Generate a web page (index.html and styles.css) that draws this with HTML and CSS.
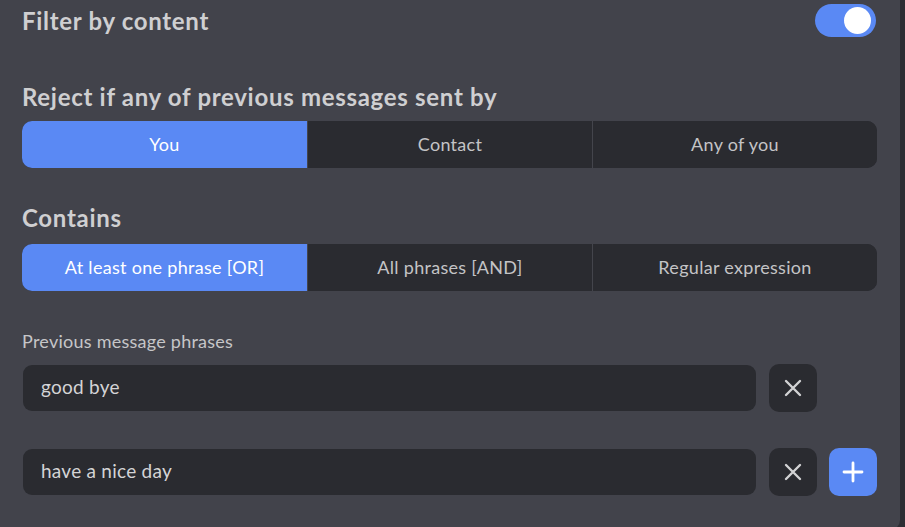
FILE: index.html
```html
<!DOCTYPE html>
<html lang="en">
<head>
    <meta charset="UTF-8">
    <meta name="viewport" content="width=device-width, initial-scale=1.0">
    <title>Filter by content</title>
    <link rel="stylesheet" href="styles.css">
</head>
<body>
    <div id="panel">
        <div class="toprow">
            <h2 class="title">Filter by content</h2>
            <div class="toggle on"><span class="knob"></span></div>
        </div>

        <h2 class="title reject">Reject if any of previous messages sent by</h2>
        <div class="segments first">
            <button class="seg active">You</button>
            <button class="seg">Contact</button>
            <button class="seg">Any of you</button>
        </div>

        <h2 class="title contains">Contains</h2>
        <div class="segments second">
            <button class="seg active">At least one phrase [OR]</button>
            <button class="seg">All phrases [AND]</button>
            <button class="seg">Regular expression</button>
        </div>

        <div class="label">Previous message phrases</div>

        <div class="phrase">
            <input type="text" value="good bye">
            <button class="iconbtn remove">
                <svg width="20" height="20" viewBox="0 0 20 20"><path d="M3 3 L17 17 M17 3 L3 17" stroke="currentColor" stroke-width="2.4" stroke-linecap="round"/></svg>
            </button>
        </div>
        <div class="phrase">
            <input type="text" value="have a nice day">
            <button class="iconbtn remove">
                <svg width="20" height="20" viewBox="0 0 20 20"><path d="M3 3 L17 17 M17 3 L3 17" stroke="currentColor" stroke-width="2.4" stroke-linecap="round"/></svg>
            </button>
            <button class="iconbtn add">
                <svg width="22" height="22" viewBox="0 0 22 22"><path d="M11 2 V20 M2 11 H20" stroke="currentColor" stroke-width="2.8" stroke-linecap="round"/></svg>
            </button>
        </div>
    </div>
</body>
</html>
```

FILE: styles.css
```css
body
{
    margin: 0;
    background-color: #2d2e34;
    font-family: Lato, "Open Sans", sans-serif;
    overflow: hidden;
}

#panel
{
    width: 900px;
    height: 540px;
    box-sizing: border-box;
    padding: 0 23px 0 22px;
    background-color: #42434b;
    border-radius: 0 0 10px 0;
    margin-top: -10px;
    padding-top: 10px;
}

.toprow
{
    height: 41px;
    display: flex;
    justify-content: space-between;
    align-items: center;
}

.title
{
    margin: 0;
    font-size: 24px;
    line-height: 30px;
    letter-spacing: 0.7px;
    font-weight: 700;
    color: #cfcfd1;
}

.reject
{
    margin-top: 41px;
}

.contains
{
    margin-top: 35px;
}

.toggle
{
    width: 61px;
    height: 33px;
    border-radius: 17px;
    background-color: #5a89f4;
    position: relative;
    margin-right: 1px;
}

.toggle .knob
{
    position: absolute;
    top: 3px;
    right: 5px;
    width: 27px;
    height: 27px;
    border-radius: 50%;
    background-color: #ffffff;
}

.segments
{
    display: grid;
    grid-template-columns: 1fr 1fr 1fr;
    height: 47px;
    border-radius: 10px;
    overflow: hidden;
    background-color: #2a2b30;
}

.segments.first
{
    margin-top: 9px;
}

.segments.second
{
    margin-top: 11px;
}

.seg
{
    border: none;
    background-color: #2a2b30;
    color: #c4c4c6;
    font-family: Lato, "Open Sans", sans-serif;
    font-size: 18px;
    letter-spacing: 0.3px;
    padding: 0 0 2px 0;
}

.seg + .seg
{
    border-left: 1px solid #44454c;
}

.seg.active
{
    background-color: #5a89f4;
    color: #ffffff;
}

.label
{
    margin-top: 38px;
    font-size: 18px;
    line-height: 24px;
    letter-spacing: 0.25px;
    color: #c6c6c8;
}

.phrase
{
    display: grid;
    grid-template-columns: 1fr 48px 48px;
    column-gap: 12px;
    align-items: center;
    height: 48px;
    margin-top: 11px;
}

.phrase + .phrase
{
    margin-top: 36px;
}

.phrase input
{
    height: 46px;
    box-sizing: border-box;
    margin-left: 1px;
    margin-right: 1px;
    border: none;
    border-radius: 9px;
    background-color: #2a2b30;
    color: #d4d4d6;
    font-family: Lato, "Open Sans", sans-serif;
    font-size: 19px;
    letter-spacing: 0.25px;
    padding: 0 18px 3px 18px;
    outline: none;
}

.iconbtn
{
    width: 48px;
    height: 48px;
    border: none;
    border-radius: 10px;
    display: flex;
    align-items: center;
    justify-content: center;
    padding: 0;
}

.iconbtn.remove
{
    background-color: #2a2b30;
    color: #d2d2d4;
}

.iconbtn.add
{
    background-color: #5a89f4;
    color: #ffffff;
}
```
